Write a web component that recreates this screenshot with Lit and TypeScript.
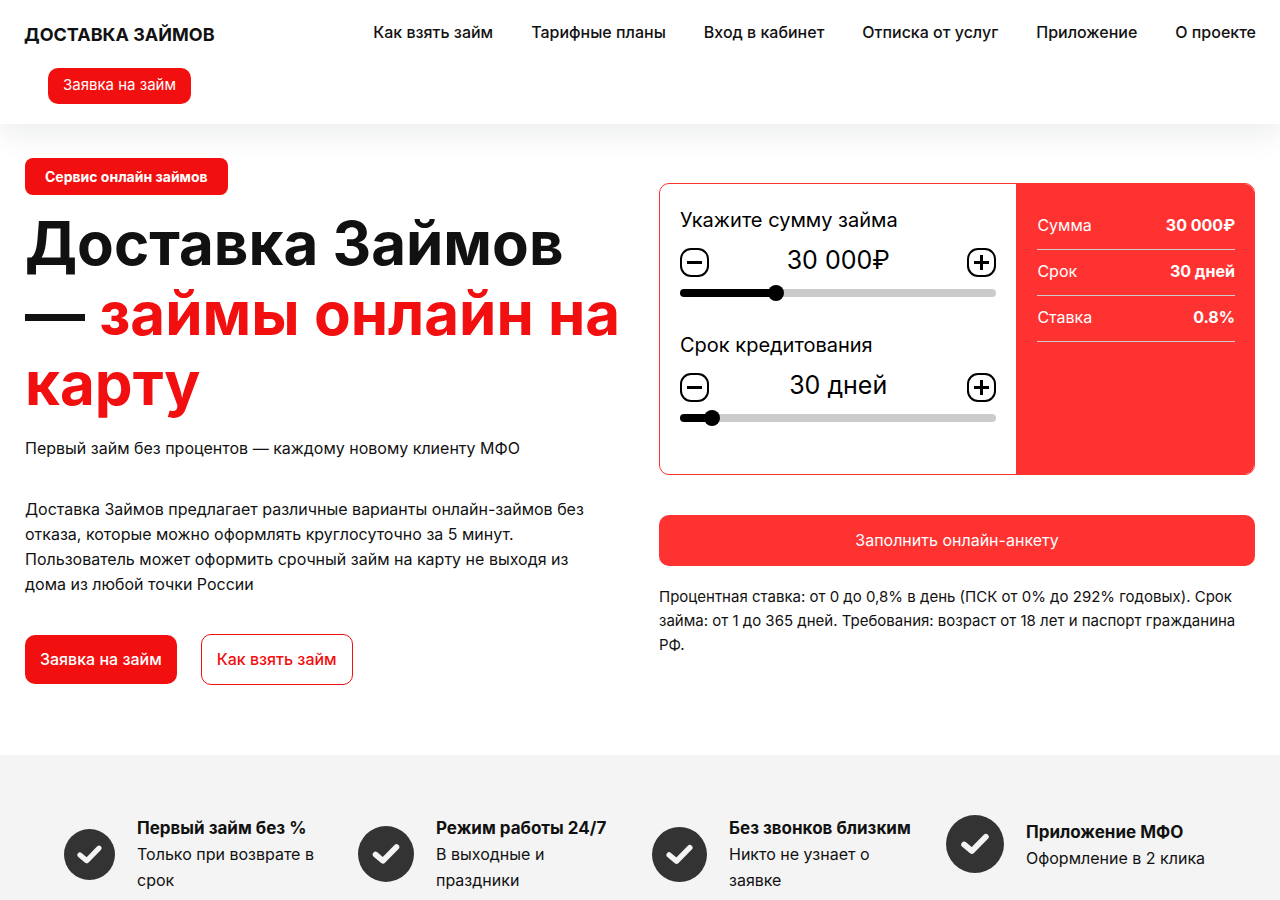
import { LitElement, html, css } from "lit";
import { customElement, state } from "lit/decorators.js";

const NAV = ["Как взять займ", "Тарифные планы", "Вход в кабинет", "Отписка от услуг", "Приложение", "О проекте"];

const FEATURES = [
  { title: "Первый займ без %", text: "Только при возврате в срок", size: 51 },
  { title: "Режим работы 24/7", text: "В выходные и праздники", size: 56 },
  { title: "Без звонков близким", text: "Никто не узнает о заявке", size: 55 },
  { title: "Приложение МФО", text: "Оформление в 2 клика", size: 58 },
];

@customElement("app-root")
export class AppRoot extends LitElement {
  @state() private amount = 30000;
  @state() private days = 30;

  static styles = css`
    :host {
      display: block;
      font-family: Inter, "Noto Sans", sans-serif;
      font-size: 16px;
      line-height: 26px;
      color: #111;
      background: #fff;
    }
    *, *::before, *::after { box-sizing: border-box; }
    h1, p, dl, dd, ul { margin: 0; padding: 0; }
    a { color: inherit; text-decoration: none; }
    button { font: inherit; color: inherit; cursor: pointer; }

    .header {
      position: relative;
      padding: 20px 24px;
      background: #fff;
      box-shadow: 0 10px 28px rgba(18, 24, 40, 0.08);
    }
    .bar { display: flex; justify-content: space-between; align-items: flex-start; }
    .brand { font-size: 18px; line-height: 30px; font-weight: 700; text-transform: uppercase; }
    .nav { display: flex; flex-wrap: wrap; gap: 0 38px; font-weight: 500; line-height: 24px; }
    .apply {
      display: inline-block;
      margin: 18px 24px 0;
      padding: 5px 15px 7px;
      border-radius: 10px;
      background: #f20f0f;
      color: #fff;
      font-size: 15px;
      line-height: 24px;
      vertical-align: top;
    }

    .hero {
      display: grid;
      grid-template-columns: 1fr 1fr;
      gap: 38px;
      padding: 34px 25px 70px;
    }
    .tag {
      display: inline-block;
      padding: 8px 20px;
      border-radius: 8px;
      background: #f20f0f;
      color: #fff;
      font-size: 14px;
      line-height: 21px;
      font-weight: 700;
      vertical-align: top;
    }
    .title { margin-top: 13px; font-size: 60px; line-height: 70px; font-weight: 700; }
    .accent { color: #f20f0f; }
    .lead { margin-top: 17px; }
    .about { margin-top: 36px; padding-right: 12px; line-height: 25px; }
    .actions { display: flex; align-items: center; gap: 24px; margin-top: 37px; }
    .btn { padding: 12px 15px; border-radius: 10px; font-weight: 500; line-height: 25px; }
    .solid { background: #f20f0f; color: #fff; }
    .outline { border: 1px solid #f20f0f; color: #f20f0f; }

    .side { padding-top: 25px; }
    .calc {
      display: grid;
      grid-template-columns: 3fr 2fr;
      border: 1px solid #ff3232;
      border-radius: 10px;
      overflow: hidden;
    }
    .controls { display: grid; gap: 32px; padding: 20px 20px 52px; color: #000; }
    .label { display: block; font-size: 20px; line-height: 32px; }
    .stepper { display: flex; justify-content: space-between; align-items: flex-end; margin-top: 8px; }
    .value { font-size: 25px; line-height: 33px; }
    .step {
      display: grid;
      place-items: center;
      width: 29px;
      height: 29px;
      padding: 0;
      border: 2px solid #000;
      border-radius: 11px;
      background: #fff;
    }
    .glyph { display: block; width: 15px; height: 15px; fill: #000; }
    .range {
      -webkit-appearance: none;
      appearance: none;
      display: block;
      width: 100%;
      height: 8px;
      margin: 12px 0 0;
      border-radius: 4px;
      background: linear-gradient(to right, #000 var(--fill), #cbcbcb var(--fill));
    }
    .range::-webkit-slider-thumb {
      -webkit-appearance: none;
      width: 16px;
      height: 16px;
      border-radius: 50%;
      background: #000;
    }
    .summary { padding: 20px 19px 20px 21px; background: #ff3232; color: #fff; }
    .row {
      display: flex;
      justify-content: space-between;
      padding: 8px 0 11px;
      border-bottom: 1px solid #ccc;
    }
    .row dd { font-weight: 700; }
    .submit {
      display: block;
      width: 100%;
      margin-top: 40px;
      padding: 13px;
      border: 0;
      border-radius: 10px;
      background: #ff3232;
      color: #fff;
      line-height: 25px;
    }
    .terms { margin-top: 19px; font-size: 15px; line-height: 24px; }

    .features {
      display: grid;
      grid-template-columns: repeat(4, 1fr);
      gap: 24px;
      padding: 60px 64px;
      background: #f4f4f4;
      list-style: none;
    }
    .feature { display: flex; align-items: center; gap: 22px; }
    .feature:last-child { align-items: flex-start; }
    .feature:last-child .copy { padding-top: 4px; }
    .check { flex: none; display: block; }
    .name { font-size: 17px; font-weight: 700; }

    @media (max-width: 900px) {
      .hero { grid-template-columns: 1fr; }
      .features { grid-template-columns: 1fr 1fr; }
    }
  `;

  private slider(id: string, label: string, text: string, value: number, min: number, max: number, step: number, set: (v: number) => void) {
    const move = (v: number) => set(Math.min(max, Math.max(min, v)));
    const fill = ((value - min) / (max - min)) * 100;
    return html`
      <div>
        <label class="label" for=${id}>${label}</label>
        <div class="stepper">
          <button class="step" type="button" aria-label="Меньше" @click=${() => move(value - step)}>
            <svg class="glyph" viewBox="0 0 15 15"><rect y="6" width="15" height="3" /></svg>
          </button>
          <output class="value" for=${id}>${text}</output>
          <button class="step" type="button" aria-label="Больше" @click=${() => move(value + step)}>
            <svg class="glyph" viewBox="0 0 15 15"><rect y="6" width="15" height="3" /><rect x="6" width="3" height="15" /></svg>
          </button>
        </div>
        <input class="range" id=${id} type="range" min=${min} max=${max} .value=${String(value)}
          style="--fill:${fill}%"
          @input=${(e: Event) => move(Number((e.target as HTMLInputElement).value))} />
      </div>
    `;
  }

  render() {
    const sum = `${String(this.amount).replace(/\B(?=(\d{3})+$)/g, " ")}₽`;
    const term = `${this.days} дней`;
    return html`
      <header class="header">
        <div class="bar">
          <a class="brand" href="#">Доставка Займов</a>
          <nav class="nav">${NAV.map((n) => html`<a href="#">${n}</a>`)}</nav>
        </div>
        <a class="apply" href="#">Заявка на займ</a>
      </header>
      <main>
        <section class="hero">
          <div>
            <span class="tag">Сервис онлайн займов</span>
            <h1 class="title">Доставка Займов — <span class="accent">займы онлайн на карту</span></h1>
            <p class="lead">Первый займ без процентов — каждому новому клиенту МФО</p>
            <p class="about">Доставка Займов предлагает различные варианты онлайн-займов без отказа, которые можно оформлять круглосуточно за 5 минут. Пользователь может оформить срочный займ на карту не выходя из дома из любой точки России</p>
            <div class="actions">
              <a class="btn solid" href="#">Заявка на займ</a>
              <a class="btn outline" href="#">Как взять займ</a>
            </div>
          </div>
          <div class="side">
            <div class="calc">
              <div class="controls">
                ${this.slider("amount", "Укажите сумму займа", sum, this.amount, 1000, 100000, 1000, (v) => (this.amount = v))}
                ${this.slider("days", "Срок кредитования", term, this.days, 1, 365, 1, (v) => (this.days = v))}
              </div>
              <dl class="summary">
                <div class="row"><dt>Сумма</dt><dd>${sum}</dd></div>
                <div class="row"><dt>Срок</dt><dd>${term}</dd></div>
                <div class="row"><dt>Ставка</dt><dd>0.8%</dd></div>
              </dl>
            </div>
            <button class="submit" type="button">Заполнить онлайн-анкету</button>
            <p class="terms">Процентная ставка: от 0 до 0,8% в день (ПСК от 0% до 292% годовых). Срок займа: от 1 до 365 дней. Требования: возраст от 18 лет и паспорт гражданина РФ.</p>
          </div>
        </section>
        <ul class="features">
          ${FEATURES.map((f) => html`
            <li class="feature">
              <svg class="check" width=${f.size} height=${f.size} viewBox="0 0 56 56" aria-hidden="true">
                <circle cx="28" cy="28" r="28" fill="#333" />
                <path d="M17.5 28.5 L25 34.8 L38.5 21" fill="none" stroke="#f4f4f4" stroke-width="5.6" stroke-linecap="round" stroke-linejoin="round" />
              </svg>
              <div class="copy">
                <p class="name">${f.title}</p>
                <p>${f.text}</p>
              </div>
            </li>`)}
        </ul>
      </main>
    `;
  }
}
